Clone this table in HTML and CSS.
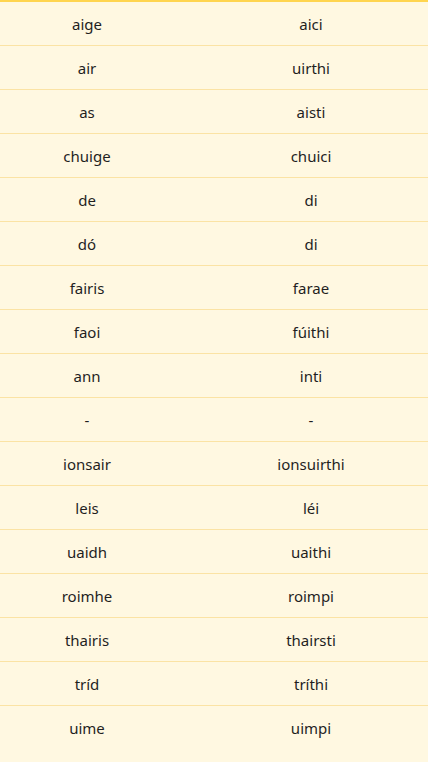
FILE: index.html
```html
<!DOCTYPE html>
<html lang="ga">
<head>
<meta charset="utf-8">
<link rel="stylesheet" href="styles.css">
</head>
<body>
<div class="table">
  <div class="row"><span>aige</span><span>aici</span></div>
  <div class="row"><span>air</span><span>uirthi</span></div>
  <div class="row"><span>as</span><span>aisti</span></div>
  <div class="row"><span>chuige</span><span>chuici</span></div>
  <div class="row"><span>de</span><span>di</span></div>
  <div class="row"><span>dó</span><span>di</span></div>
  <div class="row"><span>fairis</span><span>farae</span></div>
  <div class="row"><span>faoi</span><span>fúithi</span></div>
  <div class="row"><span>ann</span><span>inti</span></div>
  <div class="row"><span>-</span><span>-</span></div>
  <div class="row"><span>ionsair</span><span>ionsuirthi</span></div>
  <div class="row"><span>leis</span><span>léi</span></div>
  <div class="row"><span>uaidh</span><span>uaithi</span></div>
  <div class="row"><span>roimhe</span><span>roimpi</span></div>
  <div class="row"><span>thairis</span><span>thairsti</span></div>
  <div class="row"><span>tríd</span><span>tríthi</span></div>
  <div class="row last"><span>uime</span><span>uimpi</span></div>
</div>
</body>
</html>
```
FILE: styles.css
```css
html, body {
  margin: 0;
  padding: 0;
  background: #fff8e1;
}
body {
  font-family: "Noto Sans", "Open Sans", sans-serif;
  font-size: 15px;
  color: #1f1f1f;
  overflow: hidden;
  height: 762px;
}
.table {
  border-top: 2px solid #ffd54f;
  width: 448px;
}
.row {
  display: grid;
  grid-template-columns: 174px 274px;
  height: 43px;
  align-items: center;
  border-bottom: 1px solid #fbe3a4;
}
.row.last {
  border-bottom: none;
}
.row span {
  text-align: center;
  line-height: 20px;
}
```
